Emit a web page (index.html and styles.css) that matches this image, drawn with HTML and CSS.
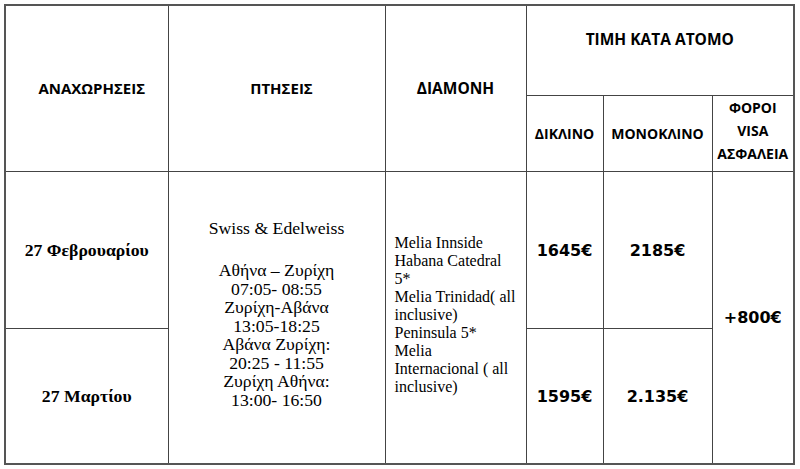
FILE: index.html
```html
<!DOCTYPE html>
<html lang="el">
<head>
<meta charset="utf-8">
<title>Αναχωρήσεις</title>
<link rel="stylesheet" href="styles.css">
</head>
<body>
<table class="tour">
  <colgroup>
    <col class="c-date">
    <col class="c-flight">
    <col class="c-hotel">
    <col class="c-double">
    <col class="c-single">
    <col class="c-tax">
  </colgroup>
  <thead>
    <tr class="h1">
      <th rowspan="2" class="shift">ΑΝΑΧΩΡΗΣΕΙΣ</th>
      <th rowspan="2" class="shift">ΠΤΗΣΕΙΣ</th>
      <th rowspan="2">ΔΙΑΜΟΝΗ</th>
      <th colspan="3" class="price-head">ΤΙΜΗ ΚΑΤΑ ΑΤΟΜΟ</th>
    </tr>
    <tr class="h2">
      <th>ΔΙΚΛΙΝΟ</th>
      <th>ΜΟΝΟΚΛΙΝΟ</th>
      <th class="tax-head">ΦΟΡΟΙ<br>VISA<br>ΑΣΦΑΛΕΙΑ</th>
    </tr>
  </thead>
  <tbody>
    <tr class="r1">
      <td class="date">27 Φεβρουαρίου</td>
      <td rowspan="2" class="flights"><div class="airline">Swiss &amp; Edelweiss</div>Αθήνα – Ζυρίχη<br>07:05- 08:55<br>Ζυρίχη-Αβάνα<br>13:05-18:25<br>Αβάνα Ζυρίχη:<br>20:25 - 11:55<br>Ζυρίχη Αθήνα:<br>13:00- 16:50</td>
      <td rowspan="2" class="hotels">Melia Innside Habana Catedral 5*<br>Melia Trinidad( all inclusive)<br>Peninsula 5*<br>Melia Internacional ( all inclusive)</td>
      <td class="price">1645€</td>
      <td class="price">2185€</td>
      <td rowspan="2" class="price">+800€</td>
    </tr>
    <tr class="r2">
      <td class="date">27 Μαρτίου</td>
      <td class="price">1595€</td>
      <td class="price">2.135€</td>
    </tr>
  </tbody>
</table>
</body>
</html>
```
FILE: styles.css
```css
html, body {
  margin: 0;
  padding: 0;
  background: #ffffff;
}

body {
  padding: 4px 0 0 4px;
}

.tour {
  border-collapse: collapse;
  table-layout: fixed;
  width: 789px;
  border: 2px solid #555555;
  color: #000000;
}

.c-date { width: 163px; }
.c-flight { width: 217px; }
.c-hotel { width: 141px; }
.c-double { width: 77px; }
.c-single { width: 109px; }
.c-tax { width: 82px; }

.tour th,
.tour td {
  border: 1px solid #444444;
  padding: 0;
  text-align: center;
  vertical-align: middle;
}

.tour th {
  font-family: "Open Sans", "Noto Sans", sans-serif;
  font-weight: 700;
  font-size: 15.5px;
  line-height: 23px;
}

.h1 th {
  height: 89px;
}

.h1 .shift {
  font-size: 15px;
  padding-left: 10px;
}

.h1 .price-head {
  vertical-align: top;
  padding-top: 22px;
  height: 67px;
}

.h2 th {
  height: 75px;
  font-size: 14px;
}

.h2 .tax-head {
  padding-bottom: 6px;
  height: 69px;
}

.r1 td {
  height: 156px;
}

.r2 td {
  height: 134px;
}

.date {
  font-family: "Liberation Serif", "Times New Roman", serif;
  font-weight: 700;
  font-size: 17.7px;
}

.flights {
  font-family: "Liberation Serif", "Times New Roman", serif;
  font-size: 17.7px;
  line-height: 18.6px;
  padding-bottom: 6px !important;
}

.airline {
  margin-bottom: 23px;
}

.hotels {
  font-family: "Liberation Serif", "Times New Roman", serif;
  font-size: 16px;
  line-height: 18px;
  text-align: left !important;
  padding: 0 8px 6px 9px !important;
}

.price {
  font-family: "DejaVu Sans", Verdana, sans-serif;
  font-weight: 700;
  font-size: 16px;
}
```
